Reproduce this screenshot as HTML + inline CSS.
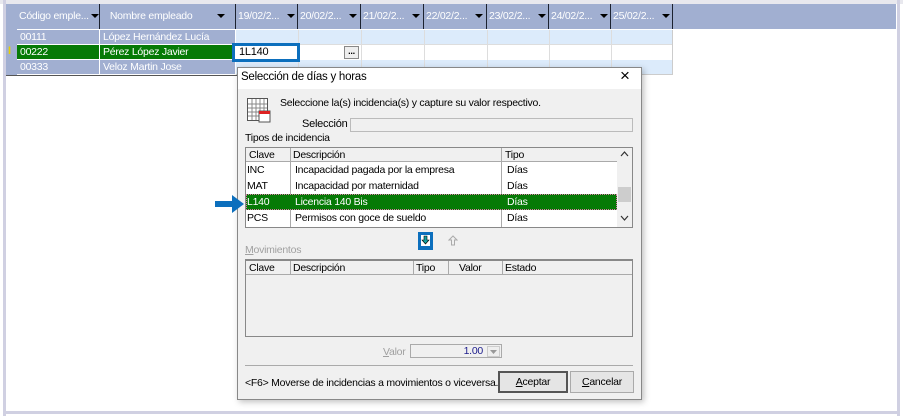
<!DOCTYPE html><html><head><meta charset="utf-8"><style>
*{margin:0;padding:0;box-sizing:border-box}
body{width:903px;height:416px;background:#fff;font-family:"Liberation Sans",sans-serif;font-size:10.5px;letter-spacing:-0.25px;position:relative;overflow:hidden}
.a{position:absolute}
.hd{background:#a1afd1;color:#fff;height:25px;top:4px;line-height:25px;border-right:1px solid #1c2230;white-space:nowrap;overflow:hidden}
.c{position:absolute;height:15px;line-height:15px;color:#fff;padding-left:3px;border-right:1px solid #fff;border-bottom:1px solid #fff;white-space:nowrap}
.arr{display:inline-block;border-left:4px solid transparent;border-right:4px solid transparent;border-top:4px solid #000;vertical-align:middle;margin-left:5px}
.t{color:#000;white-space:nowrap}
</style></head><body>
<div class="a" style="left:0;top:0;width:903px;height:4px;background:#e8e8ee"></div>
<div class="a" style="left:3px;top:0;width:3px;height:416px;background:#d0d0e2"></div>
<div class="a" style="left:897px;top:0;width:3px;height:416px;background:#d0d0e2"></div>
<div class="a" style="left:3px;top:411px;width:897px;height:3px;background:#d0d0e2"></div>
<div class="a" style="left:6px;top:4px;width:890px;height:25px;background:#a1afd1"></div>
<div class="a hd" style="left:17px;width:83px;padding-left:2px">Código emple... <span class="arr" style="margin-left:0"></span><b style="color:#000">↑</b></div>
<div class="a hd" style="left:100px;width:136px;text-align:center">Nombre empleado <span class="arr" style="margin-left:22px"></span></div>
<div class="a hd" style="left:236px;width:62px;padding-left:2px">19/02/2... <span class="arr"></span></div>
<div class="a hd" style="left:298px;width:63px;padding-left:2px">20/02/2... <span class="arr"></span></div>
<div class="a hd" style="left:361px;width:63px;padding-left:2px">21/02/2... <span class="arr"></span></div>
<div class="a hd" style="left:424px;width:63px;padding-left:2px">22/02/2... <span class="arr"></span></div>
<div class="a hd" style="left:487px;width:62px;padding-left:2px">23/02/2... <span class="arr"></span></div>
<div class="a hd" style="left:549px;width:62px;padding-left:2px">24/02/2... <span class="arr"></span></div>
<div class="a hd" style="left:611px;width:62px;padding-left:2px">25/02/2... <span class="arr"></span></div>
<div class="a" style="left:6px;top:29px;width:11px;height:46px;background:#a1afd1"></div>
<div class="a" style="left:6px;top:75px;width:231px;height:1px;background:#555"></div>
<div class="a" style="left:8px;top:45px;color:#e8d000;font-weight:bold;font-size:11px">I</div>
<div class="c" style="left:17px;top:30px;width:83px;background:#a1afd1">00111</div>
<div class="c" style="left:100px;top:30px;width:136px;background:#a1afd1">López Hernández Lucía</div>
<div class="c" style="left:17px;top:45px;width:83px;background:#067a06">00222</div>
<div class="c" style="left:100px;top:45px;width:136px;background:#067a06">Pérez López Javier</div>
<div class="c" style="left:17px;top:60px;width:83px;background:#a1afd1">00333</div>
<div class="c" style="left:100px;top:60px;width:136px;background:#a1afd1">Veloz Martin Jose</div>
<div class="a" style="left:236px;top:30px;width:437px;height:15px;background:#dcebfb;border-bottom:1px solid #ddd"></div>
<div class="a" style="left:236px;top:60px;width:437px;height:15px;background:#dcebfb;border-bottom:1px solid #ccc"></div>
<div class="a" style="left:672px;top:30px;width:1px;height:45px;background:#ccc"></div>
<div class="a" style="left:298px;top:30px;width:1px;height:45px;background:#ddd"></div>
<div class="a" style="left:361px;top:30px;width:1px;height:45px;background:#ddd"></div>
<div class="a" style="left:424px;top:30px;width:1px;height:45px;background:#ddd"></div>
<div class="a" style="left:487px;top:30px;width:1px;height:45px;background:#ddd"></div>
<div class="a" style="left:549px;top:30px;width:1px;height:45px;background:#ddd"></div>
<div class="a" style="left:611px;top:30px;width:1px;height:45px;background:#ddd"></div>
<div class="a t" style="left:232px;top:43px;width:68px;height:19px;border:3px solid #0c6fbd;background:#fff;padding-left:4px;line-height:13px;font-size:11px">1L140</div>
<div class="a" style="left:344px;top:46px;width:15px;height:13px;border:1px solid #888;background:#eee;font-size:9px;text-align:center;line-height:8px;font-weight:bold">...</div>
<div class="a" style="left:237px;top:67px;width:405px;height:333px;background:#f0f0f0;border:1px solid #888;box-shadow:2px 2px 6px rgba(0,0,0,.25)"></div>
<div class="a" style="left:238px;top:68px;width:403px;height:21px;background:#fff"></div>
<div class="a t" style="left:241px;top:71px;font-size:11.5px">Selección de días y horas</div>
<div class="a t" style="left:620px;top:66px;font-size:17px">×</div>
<svg class="a" style="left:247px;top:98px" width="24" height="26"><rect x="0.5" y="0.5" width="20" height="22" fill="#fff" stroke="#555"/><path d="M1 6H20M1 10H20M1 14H20M1 18H20M5 1V22M9 1V22M13 1V22M17 1V22" stroke="#888"/><rect x="12" y="13" width="11" height="11" fill="#fff" stroke="#555"/><rect x="12" y="13" width="11" height="3" fill="#d22"/></svg>
<div class="a t" style="left:280px;top:97px">Seleccione la(s) incidencia(s) y capture su valor respectivo.</div>
<div class="a t" style="left:302px;top:118px;font-size:11px">Selección</div>
<div class="a" style="left:350px;top:118px;width:283px;height:14px;border:1px solid #bbb;background:#f0f0f0"></div>
<div class="a t" style="left:245px;top:132px">Tipos de incidencia</div>
<div class="a" style="left:245px;top:147px;width:388px;height:81px;border:1px solid #888;background:#fff"></div>
<div class="a" style="left:246px;top:148px;width:371px;height:14px;background:#f0f0f0;border-bottom:1px solid #aaa"></div>
<div class="a" style="left:617px;top:148px;width:15px;height:79px;background:#f0f0f0"></div>
<div class="a" style="left:618px;top:187px;width:13px;height:15px;background:#cdcdcd"></div>
<svg class="a" style="left:620px;top:150px" width="9" height="8"><path d="M1 6L4.5 2L8 6" fill="none" stroke="#333" stroke-width="1.2"/></svg>
<svg class="a" style="left:620px;top:214px" width="9" height="8"><path d="M1 2L4.5 6L8 2" fill="none" stroke="#333" stroke-width="1.2"/></svg>
<div class="a" style="left:290px;top:148px;width:1px;height:79px;background:#aaa"></div>
<div class="a" style="left:501px;top:148px;width:1px;height:79px;background:#aaa"></div>
<div class="a" style="left:246px;top:194px;width:371px;height:16px;background:#067a06;border:1px dotted #d7a"></div>
<div class="a t" style="left:249px;top:149px">Clave</div><div class="a t" style="left:293px;top:149px">Descripción</div><div class="a t" style="left:505px;top:149px">Tipo</div>
<div class="a t" style="left:247px;top:164px">INC</div><div class="a t" style="left:295px;top:164px">Incapacidad pagada por la empresa</div><div class="a t" style="left:507px;top:164px">Días</div>
<div class="a t" style="left:247px;top:180px">MAT</div><div class="a t" style="left:295px;top:180px">Incapacidad por maternidad</div><div class="a t" style="left:507px;top:180px">Días</div>
<div class="a t" style="left:247px;top:196px;color:#fff">L140</div><div class="a t" style="left:295px;top:196px;color:#fff">Licencia 140 Bis</div><div class="a t" style="left:507px;top:196px;color:#fff">Días</div>
<div class="a t" style="left:247px;top:212px">PCS</div><div class="a t" style="left:295px;top:212px">Permisos con goce de sueldo</div><div class="a t" style="left:507px;top:212px">Días</div>
<svg class="a" style="left:215px;top:194px" width="30" height="20"><path d="M0 7H17V1L29 10L17 19V13H0Z" fill="#0c6fbd"/></svg>
<div class="a" style="left:418px;top:232px;width:15px;height:18px;background:#0c6fbd"></div>
<svg class="a" style="left:420px;top:234px" width="11" height="13"><rect x="1" y="1" width="9" height="11" fill="#fff"/><path d="M4 2H7V6H9L5.5 10L2 6H4Z" fill="#12a0a0" stroke="#000" stroke-width=".6"/></svg>
<svg class="a" style="left:448px;top:235px" width="10" height="11"><path d="M3.5 10V5H1L5 1L9 5H6.5V10Z" fill="none" stroke="#aaa"/></svg>
<div class="a" style="left:245px;top:244px;color:#a0a0a0"><u>M</u>ovimientos</div>
<div class="a" style="left:245px;top:259px;width:388px;height:78px;border:1px solid #888;border-top:2px solid #888;background:#f0f0f0"></div>
<div class="a" style="left:246px;top:261px;width:386px;height:14px;border-bottom:1px solid #aaa"></div>
<div class="a" style="left:290px;top:261px;width:1px;height:14px;background:#aaa"></div>
<div class="a" style="left:413px;top:261px;width:1px;height:14px;background:#aaa"></div>
<div class="a" style="left:448px;top:261px;width:1px;height:14px;background:#aaa"></div>
<div class="a" style="left:502px;top:261px;width:1px;height:14px;background:#aaa"></div>
<div class="a t" style="left:249px;top:262px">Clave</div><div class="a t" style="left:293px;top:262px">Descripción</div><div class="a t" style="left:416px;top:262px">Tipo</div><div class="a t" style="left:459px;top:262px">Valor</div><div class="a t" style="left:505px;top:262px">Estado</div>
<div class="a" style="left:383px;top:346px;color:#a0a0a0"><u>V</u>alor</div>
<div class="a" style="left:410px;top:344px;width:92px;height:14px;border:1px solid #aaa;background:#f0f0f0;color:#1c1c8c;text-align:right;padding-right:18px;line-height:12px">1.00</div>
<div class="a" style="left:487px;top:346px;width:13px;height:11px;border:1px solid #ccc;background:#eee"></div>
<svg class="a" style="left:490px;top:350px" width="7" height="4"><path d="M0 0H7L3.5 4Z" fill="#999"/></svg>
<div class="a" style="left:245px;top:365px;width:388px;height:1px;background:#aaa"></div>
<div class="a t" style="left:245px;top:377px">&lt;F6&gt; Moverse de incidencias a movimientos o viceversa.</div>
<div class="a t" style="left:498px;top:371px;width:70px;height:22px;border:2px solid #555;background:#e5e5e5;text-align:center;line-height:18px"><u>A</u>ceptar</div>
<div class="a t" style="left:570px;top:371px;width:64px;height:22px;border:1px solid #aaa;background:#e5e5e5;text-align:center;line-height:20px"><u>C</u>ancelar</div>
</body></html>
